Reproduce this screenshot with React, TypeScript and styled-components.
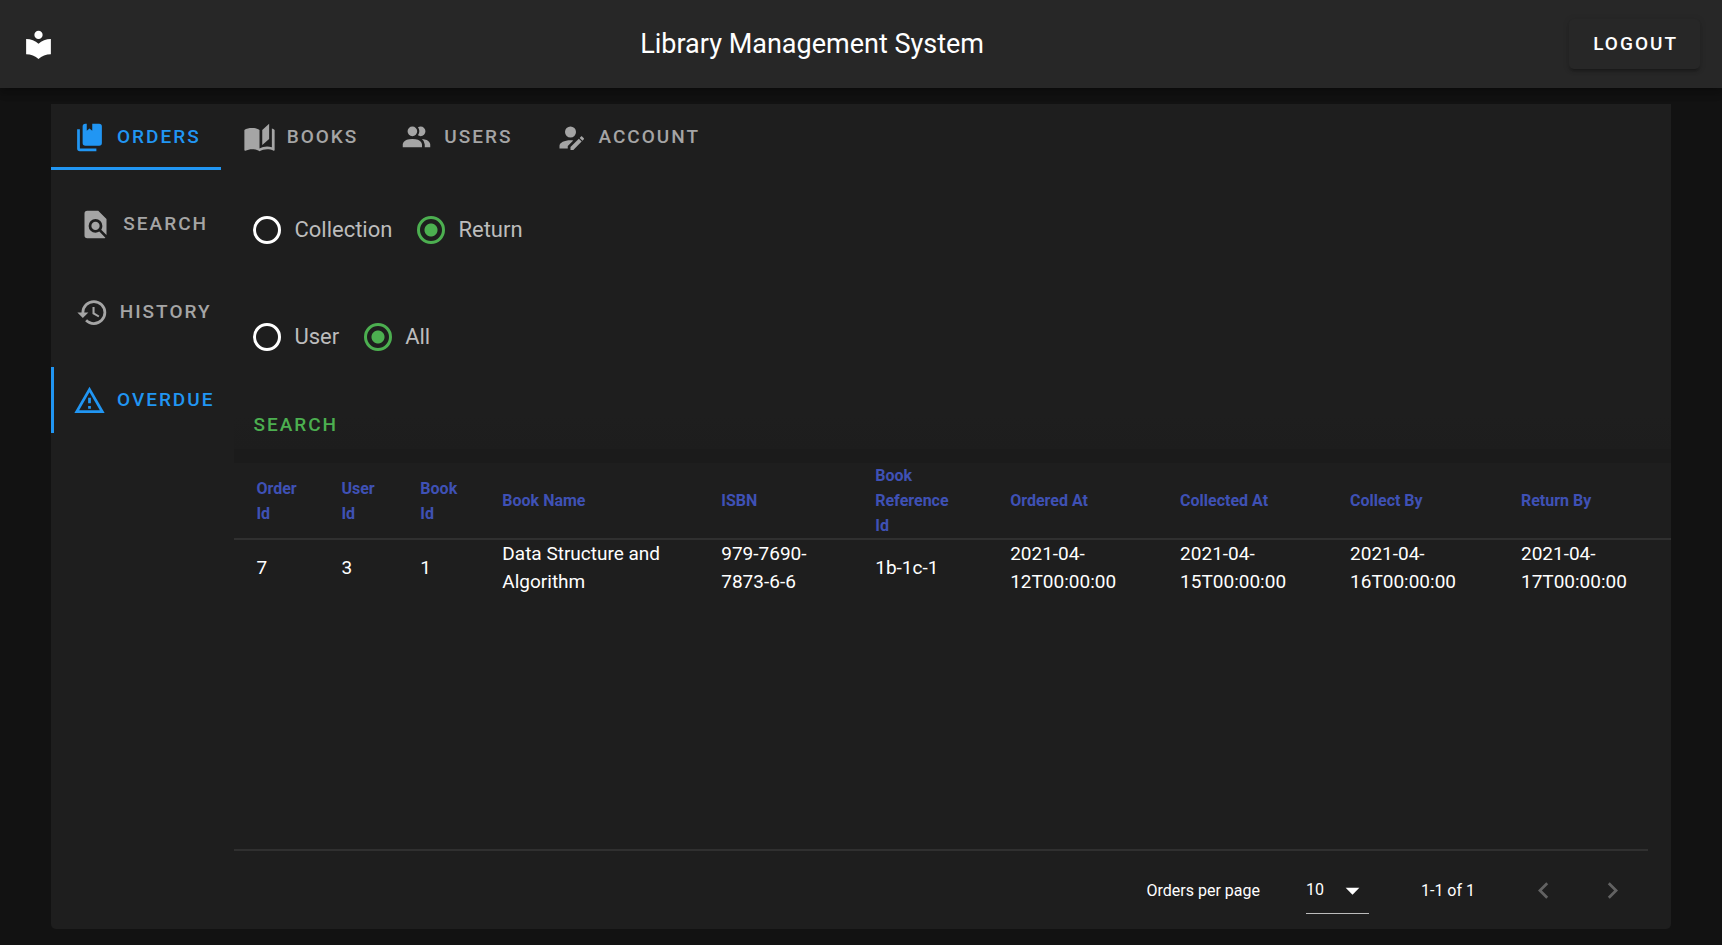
import React, { useState } from "react";
import styled, { createGlobalStyle, css } from "styled-components";

const color = {
  page: "#121212",
  bar: "#272727",
  panel: "#1e1e1e",
  line: "#303030",
  text: "#ffffff",
  label: "#bcbcbc",
  muted: "#a5a5a5",
  disabled: "#626262",
  active: "#2196f3",
  success: "#4caf50",
  heading: "#3f51b5",
};

const GlobalStyle = createGlobalStyle`
  *, *::before, *::after { box-sizing: border-box; }
  body {
    margin: 0;
    background: ${color.page};
    color: ${color.text};
    font-family: Roboto, "Liberation Sans", sans-serif;
  }
  button, select, input { font-family: inherit; }
`;

const icons = {
  library:
    "M12,8A3,3 0 0,0 15,5A3,3 0 0,0 12,2A3,3 0 0,0 9,5A3,3 0 0,0 12,8M12,11.54C9.64,9.35 6.5,8 3,8V19C6.5,19 9.64,20.35 12,22.54C14.36,20.35 17.5,19 21,19V8C17.5,8 14.36,9.35 12,11.54Z",
  orders:
    "M19,18H9A2,2 0 0,1 7,16V4A2,2 0 0,1 9,2H10V7L12,5.5L14,7V2H19A2,2 0 0,1 21,4V16A2,2 0 0,1 19,18M17,20V22H5A2,2 0 0,1 3,20V6H5V20H17Z",
  books:
    "M19 2L14 6.5V17.5L19 13V2M6.5 5C4.55 5 2.45 5.4 1 6.5V21.16C1 21.41 1.25 21.66 1.5 21.66C1.6 21.66 1.65 21.59 1.75 21.59C3.1 20.94 5.05 20.5 6.5 20.5C8.45 20.5 10.55 20.9 12 22C13.35 21.15 15.8 20.5 17.5 20.5C19.15 20.5 20.85 20.81 22.25 21.56C22.35 21.61 22.4 21.59 22.5 21.59C22.75 21.59 23 21.34 23 21.09V6.5C22.4 6.05 21.75 5.75 21 5.5V19C19.9 18.65 18.7 18.5 17.5 18.5C15.8 18.5 13.35 19.15 12 20V6.5C10.55 5.4 8.45 5 6.5 5Z",
  users:
    "M16 17V19H2V17S2 13 9 13 16 17 16 17M12.5 7.5A3.5 3.5 0 1 0 9 11A3.5 3.5 0 0 0 12.5 7.5M15.94 13A5.32 5.32 0 0 1 18 17V19H22V17S22 13.37 15.94 13M15 4A3.39 3.39 0 0 0 13.07 4.59A5 5 0 0 1 13.07 10.41A3.39 3.39 0 0 0 15 11A3.5 3.5 0 0 0 15 4Z",
  account:
    "M21.7,13.35L20.7,14.35L18.65,12.3L19.65,11.3C19.86,11.09 20.21,11.09 20.42,11.3L21.7,12.58C21.91,12.79 21.91,13.14 21.7,13.35M12,18.94L18.06,12.88L20.11,14.93L14.06,21H12V18.94M12,14C7.58,14 4,15.79 4,18V20H10V18.11L14,14.11C13.34,14.03 12.67,14 12,14M12,4A4,4 0 0,0 8,8A4,4 0 0,0 12,12A4,4 0 0,0 16,8A4,4 0 0,0 12,4Z",
  search:
    "M9,13A3,3 0 0,0 12,16A3,3 0 0,0 15,13A3,3 0 0,0 12,10A3,3 0 0,0 9,13M20,19.59V8L14,2H6A2,2 0 0,0 4,4V20A2,2 0 0,0 6,22H18C18.45,22 18.85,21.85 19.19,21.6L14.76,17.17C13.96,17.69 13,18 12,18A5,5 0 0,1 7,13A5,5 0 0,1 12,8A5,5 0 0,1 17,13C17,14 16.69,14.96 16.17,15.75L20,19.59Z",
  history:
    "M13.5,8H12V13L16.28,15.54L17,14.33L13.5,12.25V8M13,3A9,9 0 0,0 4,12H1L4.96,16.03L9,12H6A7,7 0 0,1 13,5A7,7 0 0,1 20,12A7,7 0 0,1 13,19C11.07,19 9.32,18.21 8.06,16.94L6.64,18.36C8.27,20 10.5,21 13,21A9,9 0 0,0 22,12A9,9 0 0,0 13,3",
  overdue: "M12,2L1,21H23M12,6L19.53,19H4.47M11,10V14H13V10M11,16V18H13V16",
  menuDown: "M7,10L12,15L17,10H7Z",
  previous: "M15.41,16.58L10.83,12L15.41,7.41L14,6L8,12L14,18L15.41,16.58Z",
  next: "M8.59,16.58L13.17,12L8.59,7.41L10,6L16,12L10,18L8.59,16.58Z",
};

type IconName = keyof typeof icons;

const IconSvg = styled.svg`
  display: block;
  flex: none;
  width: 33px;
  height: 33px;
  fill: currentColor;
`;

const Icon = ({ name }: { name: IconName }) => (
  <IconSvg viewBox="0 0 24 24" aria-hidden="true">
    <path d={icons[name]} />
  </IconSvg>
);

const Page = styled.div`
  display: flex;
  flex-direction: column;
  min-height: 100vh;
`;

const AppBar = styled.header`
  display: flex;
  align-items: center;
  justify-content: space-between;
  height: 88px;
  padding: 0 22px;
  background: ${color.bar};
  box-shadow: 0 3px 6px -1px rgba(0, 0, 0, 0.2), 0 6px 7px 0 rgba(0, 0, 0, 0.14),
    0 1px 14px 0 rgba(0, 0, 0, 0.12);
`;

const Title = styled.h1`
  margin: 0;
  font-size: 27px;
  font-weight: 400;
  line-height: 40px;
`;

const buttonText = css`
  font-size: 19px;
  font-weight: 500;
  line-height: 28px;
  letter-spacing: 2px;
  text-transform: uppercase;
`;

const LogoutButton = styled.button`
  ${buttonText}
  height: 50px;
  padding: 0 22px 0 24px;
  border: 0;
  border-radius: 5px;
  background: ${color.bar};
  color: ${color.text};
  box-shadow: 0 4px 2px -3px rgba(0, 0, 0, 0.2), 0 3px 3px 0 rgba(0, 0, 0, 0.14),
    0 1px 7px 0 rgba(0, 0, 0, 0.12);
`;

const Panel = styled.main`
  display: flex;
  flex: 1;
  flex-direction: column;
  margin: 16px 51px;
  border-radius: 0 0 5px 5px;
  background: ${color.panel};
`;

const TabBar = styled.div`
  display: flex;
`;

const SideBar = styled.div`
  display: flex;
  flex: none;
  flex-direction: column;
  gap: 22px;
  padding-top: 21px;
`;

const Tab = styled.button<{ $active?: boolean; $side?: boolean }>`
  ${buttonText}
  display: flex;
  align-items: center;
  justify-content: center;
  gap: 11px;
  height: 66px;
  padding: 0 20px 0 22px;
  border: 0;
  background: none;
  color: ${(p) => (p.$active ? color.active : color.muted)};
  box-shadow: ${(p) =>
    !p.$active ? "none" : `inset ${p.$side ? "3px 0" : "0 -3px"} ${color.active}`};
`;

const Body = styled.div`
  display: flex;
  flex: 1;
`;

const Content = styled.section`
  display: flex;
  flex: 1;
  flex-direction: column;
  min-width: 0;
`;

const Filters = styled.form`
  display: flex;
  flex-direction: column;
  align-items: flex-start;
  padding: 43px 16px 13px;
  background: linear-gradient(to top, #1b1b1b 14px, #1d1d1d 14px, ${color.panel} 46px);
`;

const RadioGroup = styled.fieldset`
  display: flex;
  gap: 22px;
  margin: 0 0 73px;
  padding: 0;
  border: 0;

  & + & {
    margin-bottom: 46px;
  }
`;

const RadioLabel = styled.label`
  display: flex;
  align-items: center;
  gap: 13px;
  padding-left: 3px;
  color: ${color.label};
  font-size: 22px;
  line-height: 34px;
`;

const Radio = styled.input`
  width: 28px;
  height: 28px;
  margin: 0;
  border: 3px solid ${color.text};
  border-radius: 50%;
  appearance: none;

  &:checked {
    border-color: ${color.success};
    background: radial-gradient(circle, ${color.success} 6px, transparent 7px);
  }
`;

const SearchButton = styled.button`
  ${buttonText}
  height: 50px;
  padding: 0 3px;
  border: 0;
  background: none;
  color: ${color.success};
`;

const Table = styled.table`
  width: 100%;
  table-layout: fixed;
  border-collapse: collapse;
  text-align: left;
`;

const HeadCell = styled.th`
  padding: 0 22px;
  border-bottom: 2px solid ${color.line};
  color: ${color.heading};
  font-size: 16px;
  font-weight: 700;
  line-height: 25px;
`;

const Cell = styled.td`
  padding: 0 22px;
  font-size: 19px;
  line-height: 28px;
`;

const Footer = styled.footer`
  display: flex;
  align-items: center;
  justify-content: flex-end;
  height: 80px;
  margin: auto 23px 0 0;
  padding-right: 19px;
  border-top: 2px solid ${color.line};
  font-size: 16px;
`;

const PageSize = styled.label`
  display: flex;
  align-items: center;
  gap: 46px;
`;

const SelectBox = styled.span`
  position: relative;
  display: block;

  ${IconSvg} {
    position: absolute;
    top: 8px;
    right: 0;
    pointer-events: none;
  }
`;

const Select = styled.select`
  display: block;
  width: 63px;
  height: 48px;
  padding: 0;
  border: 0;
  border-bottom: 1px solid ${color.label};
  border-radius: 0;
  background: ${color.panel};
  color: ${color.text};
  font-size: 16px;
  appearance: none;
`;

const Range = styled.span`
  margin: 0 52px;
`;

const PagerButton = styled.button`
  padding: 0;
  border: 0;
  background: none;
  color: ${color.disabled};

  & + & {
    margin-left: 36px;
  }
`;

const tabs: { label: string; icon: IconName }[] = [
  { label: "Orders", icon: "orders" },
  { label: "Books", icon: "books" },
  { label: "Users", icon: "users" },
  { label: "Account", icon: "account" },
];

const sideTabs: { label: string; icon: IconName }[] = [
  { label: "Search", icon: "search" },
  { label: "History", icon: "history" },
  { label: "Overdue", icon: "overdue" },
];

const columns = [
  { title: "Order Id", width: 85 },
  { title: "User Id", width: 79 },
  { title: "Book Id", width: 82 },
  { title: "Book Name", width: 219 },
  { title: "ISBN", width: 154 },
  { title: "Book Reference Id", width: 135 },
  { title: "Ordered At", width: 170 },
  { title: "Collected At", width: 170 },
  { title: "Collect By", width: 171 },
  { title: "Return By", width: 172 },
];

const totalWidth = columns.reduce((sum, c) => sum + c.width, 0);

const Col = styled.col<{ $share: number }>`
  width: ${(p) => p.$share * 100}%;
`;

const orders = [
  [
    "7",
    "3",
    "1",
    "Data Structure and Algorithm",
    "979-7690-7873-6-6",
    "1b-1c-1",
    "2021-04-12T00:00:00",
    "2021-04-15T00:00:00",
    "2021-04-16T00:00:00",
    "2021-04-17T00:00:00",
  ],
];

interface ChoiceProps {
  name: string;
  options: string[];
  value: string;
  onChange: (value: string) => void;
}

const Choice = ({ name, options, value, onChange }: ChoiceProps) => (
  <RadioGroup aria-label={name}>
    {options.map((option) => (
      <RadioLabel key={option}>
        <Radio
          type="radio"
          name={name}
          checked={value === option}
          onChange={() => onChange(option)}
        />
        {option}
      </RadioLabel>
    ))}
  </RadioGroup>
);

export default function App() {
  const [tab, setTab] = useState("Orders");
  const [sideTab, setSideTab] = useState("Overdue");
  const [kind, setKind] = useState("Return");
  const [scope, setScope] = useState("All");

  return (
    <>
      <GlobalStyle />
      <Page>
        <AppBar>
          <Icon name="library" />
          <Title>Library Management System</Title>
          <LogoutButton type="button">Logout</LogoutButton>
        </AppBar>
        <Panel>
          <TabBar role="tablist">
            {tabs.map((t) => (
              <Tab
                key={t.label}
                type="button"
                role="tab"
                aria-selected={tab === t.label}
                $active={tab === t.label}
                onClick={() => setTab(t.label)}
              >
                <Icon name={t.icon} />
                {t.label}
              </Tab>
            ))}
          </TabBar>
          <Body>
            <SideBar role="tablist" aria-orientation="vertical">
              {sideTabs.map((t) => (
                <Tab
                  key={t.label}
                  type="button"
                  role="tab"
                  aria-selected={sideTab === t.label}
                  $side
                  $active={sideTab === t.label}
                  onClick={() => setSideTab(t.label)}
                >
                  <Icon name={t.icon} />
                  {t.label}
                </Tab>
              ))}
            </SideBar>
            <Content>
              <Filters onSubmit={(e) => e.preventDefault()}>
                <Choice
                  name="kind"
                  options={["Collection", "Return"]}
                  value={kind}
                  onChange={setKind}
                />
                <Choice
                  name="scope"
                  options={["User", "All"]}
                  value={scope}
                  onChange={setScope}
                />
                <SearchButton type="submit">Search</SearchButton>
              </Filters>
              <Table>
                <colgroup>
                  {columns.map((c) => (
                    <Col key={c.title} $share={c.width / totalWidth} />
                  ))}
                </colgroup>
                <thead>
                  <tr>
                    {columns.map((c) => (
                      <HeadCell key={c.title} scope="col">
                        {c.title}
                      </HeadCell>
                    ))}
                  </tr>
                </thead>
                <tbody>
                  {orders.map((row) => (
                    <tr key={row[0]}>
                      {row.map((value, i) => (
                        <Cell key={columns[i].title}>{value}</Cell>
                      ))}
                    </tr>
                  ))}
                </tbody>
              </Table>
              <Footer>
                <PageSize>
                  Orders per page
                  <SelectBox>
                    <Select defaultValue="10">
                      <option>5</option>
                      <option>10</option>
                      <option>15</option>
                    </Select>
                    <Icon name="menuDown" />
                  </SelectBox>
                </PageSize>
                <Range>1-1 of 1</Range>
                <PagerButton type="button" aria-label="Previous page" disabled>
                  <Icon name="previous" />
                </PagerButton>
                <PagerButton type="button" aria-label="Next page" disabled>
                  <Icon name="next" />
                </PagerButton>
              </Footer>
            </Content>
          </Body>
        </Panel>
      </Page>
    </>
  );
}
